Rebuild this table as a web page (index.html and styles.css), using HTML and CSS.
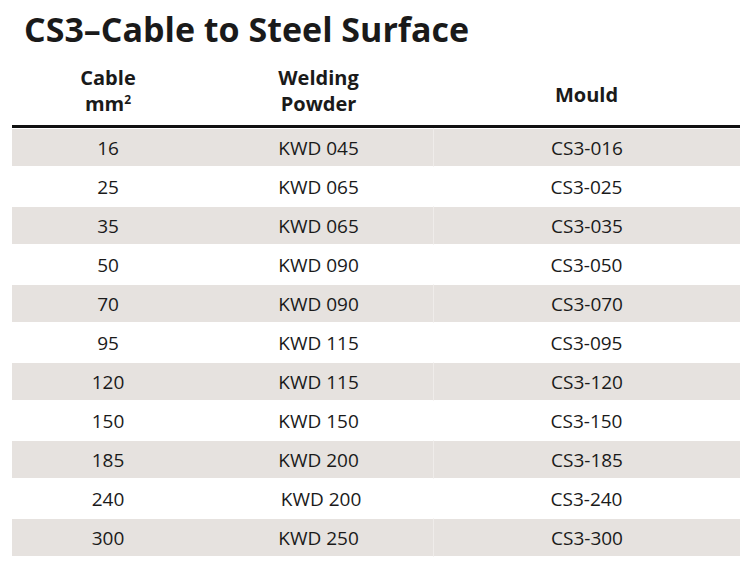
FILE: index.html
```html
<!DOCTYPE html>
<html>
<head>
<meta charset="utf-8">
<link rel="stylesheet" href="styles.css">
</head>
<body>
<h1 class="title">CS3–Cable to Steel Surface</h1>
<table class="spec">
  <thead>
    <tr>
      <th class="c1">Cable<br>mm<sup>2</sup></th>
      <th class="c2">Welding<br>Powder</th>
      <th class="c3 single">Mould</th>
    </tr>
  </thead>
  <tbody>
    <tr class="shade"><td class="c1">16</td><td class="c2">KWD 045</td><td class="c3">CS3-016</td></tr>
    <tr><td class="c1">25</td><td class="c2">KWD 065</td><td class="c3">CS3-025</td></tr>
    <tr class="shade"><td class="c1">35</td><td class="c2">KWD 065</td><td class="c3">CS3-035</td></tr>
    <tr><td class="c1">50</td><td class="c2">KWD 090</td><td class="c3">CS3-050</td></tr>
    <tr class="shade"><td class="c1">70</td><td class="c2">KWD 090</td><td class="c3">CS3-070</td></tr>
    <tr><td class="c1">95</td><td class="c2">KWD 115</td><td class="c3">CS3-095</td></tr>
    <tr class="shade"><td class="c1">120</td><td class="c2">KWD 115</td><td class="c3">CS3-120</td></tr>
    <tr><td class="c1">150</td><td class="c2">KWD 150</td><td class="c3">CS3-150</td></tr>
    <tr class="shade"><td class="c1">185</td><td class="c2">KWD 200</td><td class="c3">CS3-185</td></tr>
    <tr><td class="c1">240</td><td class="c2 nudge">KWD 200</td><td class="c3">CS3-240</td></tr>
    <tr class="shade"><td class="c1">300</td><td class="c2">KWD 250</td><td class="c3">CS3-300</td></tr>
  </tbody>
</table>
</body>
</html>
```
FILE: styles.css
```css
html, body {
  margin: 0;
  padding: 0;
  background: #ffffff;
}
body {
  font-family: "Open Sans", "Liberation Sans", sans-serif;
  color: #1a1a1a;
}
.title {
  margin: 9px 0 0 24px;
  font-size: 34px;
  line-height: 40px;
  font-weight: 700;
  letter-spacing: 0;
  color: #1a1a1a;
}
.spec {
  margin-left: 12px;
  width: 728px;
  border-collapse: separate;
  border-spacing: 0;
  table-layout: fixed;
}
.spec .c1 { width: 192px; }
.spec .c2 { width: 229px; }
.spec .c3 { width: 307px; }
.spec th {
  font-size: 20px;
  line-height: 26px;
  font-weight: 700;
  padding: 16px 0 8px;
  border-bottom: 3px solid #111;
  text-align: center;
  vertical-align: middle;
}
.spec th.single {
  padding-top: 24px;
  padding-bottom: 8px;
}
.spec sup {
  font-size: 12px;
  line-height: 0;
  vertical-align: 7px;
}
.spec td {
  height: 37px;
  padding: 0;
  border-top: 1px solid #fff;
  border-bottom: 1px solid #fff;
  font-size: 19px;
  text-align: center;
  vertical-align: middle;
}
.spec tr.shade td {
  background: #e6e2df;
  background-clip: padding-box;
}
.spec tr.shade td.c3 {
  border-left: 1px solid #efecea;
}
.spec td.nudge {
  padding-left: 5px;
}
```
